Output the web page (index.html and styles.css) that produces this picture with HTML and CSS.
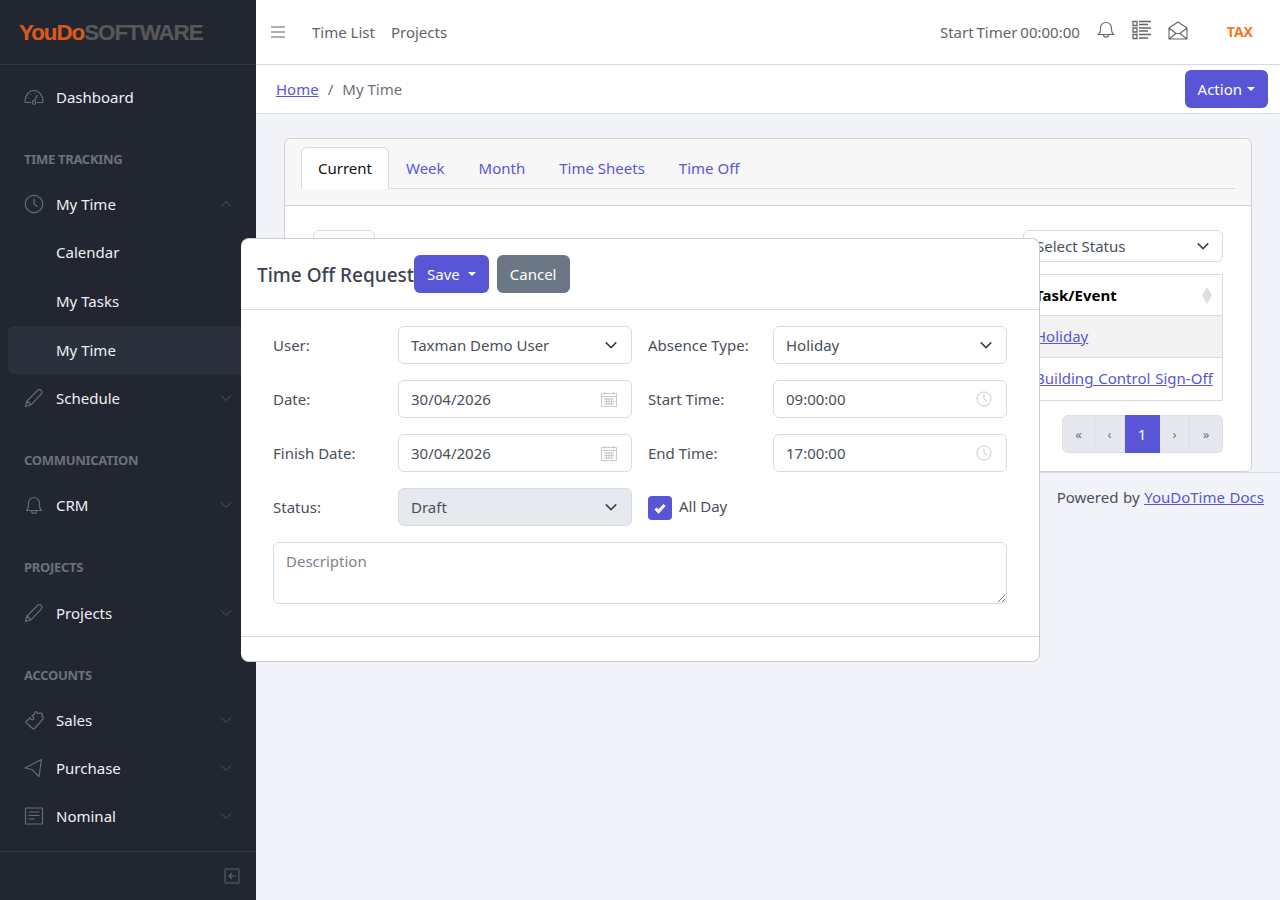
FILE: index.html
```html
<!DOCTYPE html>
<html lang="en">
<head>
    <meta charset="UTF-8">
    <title>My Time</title>
    <link rel="stylesheet" href="styles.css">
</head>
<body>
    <!-- Sidebar -->
    <aside class="sidebar">
        <div class="brand"><span class="brand-a">YouDo</span><span class="brand-b">SOFTWARE</span></div>
        <nav class="side-nav">
            <a class="side-link">
                <svg class="side-icon" viewBox="0 0 20 20"><path d="M1 15.500C1 8 5 3.500 10 3.500S19 8 19 15.500M1 15.500h6M13 15.500h6M10.500 14l2.500-6"/><circle cx="10" cy="15.500" r="1.800"/><path d="M4 11h.8M6 7.500h.8M10 6h.8"/></svg>
                <span>Dashboard</span>
            </a>
            <div class="side-title">TIME TRACKING</div>
            <a class="side-link">
                <svg class="side-icon" viewBox="0 0 20 20"><circle cx="10" cy="10" r="8.700"/><path d="M10 4.500V10l3.500 2.500"/></svg>
                <span>My Time</span>
                <svg class="side-caret" viewBox="0 0 12 8"><path d="M1 6.500l5-5 5 5"/></svg>
            </a>
            <a class="side-link side-sub">Calendar</a>
            <a class="side-link side-sub">My Tasks</a>
            <a class="side-link side-sub side-active">My Time</a>
            <a class="side-link">
                <svg class="side-icon" viewBox="0 0 20 20"><path d="M1.500 18.500l1.500-5.500L13.500 2.500a2.400 2.400 0 0 1 3.600 0 2.400 2.400 0 0 1 .2 3.400L7 16.800zM3 13l4 3.800"/></svg>
                <span>Schedule</span>
                <svg class="side-caret" viewBox="0 0 12 8"><path d="M1 1.500l5 5 5-5"/></svg>
            </a>
            <div class="side-title">COMMUNICATION</div>
            <a class="side-link">
                <svg class="side-icon" viewBox="0 0 20 20"><path d="M2.500 15.500c1.500-1.500 2-2.500 2-5V8a5.500 5.500 0 0 1 11 0v2.500c0 2.500.5 3.500 2 5zM7.500 15.500c0 4 5 4 5 0"/></svg>
                <span>CRM</span>
                <svg class="side-caret" viewBox="0 0 12 8"><path d="M1 1.500l5 5 5-5"/></svg>
            </a>
            <div class="side-title side-title-wide">PROJECTS</div>
            <a class="side-link">
                <svg class="side-icon" viewBox="0 0 20 20"><path d="M1.500 18.500l1.500-5.500L13.500 2.500a2.400 2.400 0 0 1 3.600 0 2.400 2.400 0 0 1 .2 3.400L7 16.800zM3 13l4 3.800"/></svg>
                <span>Projects</span>
                <svg class="side-caret" viewBox="0 0 12 8"><path d="M1 1.500l5 5 5-5"/></svg>
            </a>
            <div class="side-title">ACCOUNTS</div>
            <a class="side-link">
                <svg class="side-icon" viewBox="0 0 20 20"><path d="M1.500 12L6 8l1.500 1.500C9 10.500 10.500 9 9.500 7.500L8 6l2.500-2L11 2.500C12 1 14 2 13.500 3.500H15C16 2.500 18.500 3 18.500 4.500L17.500 6C19.500 6 19.500 8.500 18.500 9.500L11 18c-1 1-2 1-3 0z"/></svg>
                <span>Sales</span>
                <svg class="side-caret" viewBox="0 0 12 8"><path d="M1 1.500l5 5 5-5"/></svg>
            </a>
            <a class="side-link">
                <svg class="side-icon" viewBox="0 0 20 20"><path d="M1 10L17.500 1.500 15 18.500 8 11.500z"/></svg>
                <span>Purchase</span>
                <svg class="side-caret" viewBox="0 0 12 8"><path d="M1 1.500l5 5 5-5"/></svg>
            </a>
            <a class="side-link">
                <svg class="side-icon" viewBox="0 0 20 20"><path d="M1.500 2h17v16h-17zM4.500 6h11M4.500 9.500h11M4.500 13h6"/></svg>
                <span>Nominal</span>
                <svg class="side-caret" viewBox="0 0 12 8"><path d="M1 1.500l5 5 5-5"/></svg>
            </a>
        </nav>
        <div class="side-foot">
            <svg class="side-toggle" viewBox="0 0 16 16"><path d="M1 5V2a1 1 0 0 1 1-1h12a1 1 0 0 1 1 1v12a1 1 0 0 1-1 1H2a1 1 0 0 1-1-1v-3M1 5v6M12.500 8H5M8 5L5 8l3 3"/></svg>
        </div>
    </aside>

    <!-- Main column -->
    <div class="main">
        <header class="topbar">
            <svg class="burger" viewBox="0 0 14 12"><path d="M0 1h14M0 6h14M0 11h14"/></svg>
            <a class="top-link">Time List</a>
            <a class="top-link">Projects</a>
            <div class="top-right">
                <span class="timer">Start Timer 00:00:00</span>
                <svg class="top-icon" viewBox="0 0 18 18"><path d="M1.500 13.500c1.500-1.300 2-2.500 2-5V7a5.500 5.500 0 0 1 11 0v1.500c0 2.500.5 3.700 2 5zM6.500 13.500c0 3.500 5 3.500 5 0"/></svg>
                <svg class="top-icon top-list" viewBox="0 0 20 20"><path d="M1 1.500h4v4H1zM1 8h4v4H1zM1 14.500h4v4H1zM7 1.500h12M7 4.500h9M7 8h12M7 11h9M7 14.500h12M7 18h9"/></svg>
                <svg class="top-icon top-mail" viewBox="0 0 20 19"><path d="M1 7l9-6 9 6v11H1zM1 7l7 5.500h4L19 7M1 18l7-5.500M19 18l-7-5.500"/></svg>
                <span class="tax">TAX</span>
            </div>
        </header>
        <div class="crumbbar">
            <a class="link" href="#">Home</a>
            <span class="crumb-sep">/</span>
            <span class="crumb-now">My Time</span>
            <button class="btn btn-primary crumb-action">Action<i class="caret"></i></button>
        </div>

        <div class="content">
            <div class="card">
                <div class="card-head">
                    <ul class="tabs">
                        <li class="tab tab-active">Current</li>
                        <li class="tab">Week</li>
                        <li class="tab">Month</li>
                        <li class="tab">Time Sheets</li>
                        <li class="tab">Time Off</li>
                    </ul>
                </div>
                <div class="card-body">
                    <div class="under-top">
                        <div class="under-box"></div>
                        <div class="status-select">Select Status<svg class="chev" viewBox="0 0 16 16"><path d="M2 5l6 6 6-6"/></svg></div>
                    </div>
                    <div class="under-table">
                        <div class="ut-row ut-head"><span>Task/Event</span><svg class="sort" viewBox="0 0 10 17"><path d="M5 0l5 8.500L5 17 0 8.500z"/></svg></div>
                        <div class="ut-row ut-alt"><a class="link" href="#">Holiday</a></div>
                        <div class="ut-row ut-last"><a class="link" href="#">Building Control Sign-Off</a></div>
                    </div>
                    <div class="pager">
                        <span class="page">«</span>
                        <span class="page">‹</span>
                        <span class="page page-on">1</span>
                        <span class="page">›</span>
                        <span class="page">»</span>
                    </div>
                </div>
            </div>
        </div>
        <footer class="footer">Powered by&nbsp;<a class="link" href="#">YouDoTime Docs</a></footer>
    </div>

    <!-- Time off dialog -->
    <div class="dialog">
        <div class="dialog-head">
            <h5 class="dialog-title">Time Off Request</h5>
            <button class="btn btn-primary dialog-save">Save<i class="caret"></i></button>
            <button class="btn btn-grey">Cancel</button>
        </div>
        <div class="dialog-body">
            <div class="form-grid">
                <label class="form-label">User:</label>
                <div class="field">Taxman Demo User<svg class="chev" viewBox="0 0 16 16"><path d="M2 5l6 6 6-6"/></svg></div>
                <label class="form-label form-label-right">Absence Type:</label>
                <div class="field">Holiday<svg class="chev" viewBox="0 0 16 16"><path d="M2 5l6 6 6-6"/></svg></div>

                <label class="form-label">Date:</label>
                <div class="field">30/04/2026<svg class="field-icon" viewBox="0 0 16 16"><path d="M.5 2.500h15v13H.5zM.5 5.500h15M3.500 1v2.500M12.500 1v2.500M3 8h10M3 10.500h10M3 13h10M5.500 7v7M8 7v7M10.500 7v7"/></svg></div>
                <label class="form-label form-label-right">Start Time:</label>
                <div class="field">09:00:00<svg class="field-icon" viewBox="0 0 16 16"><circle cx="8" cy="8" r="7"/><path d="M8 3.500V8l3 2"/></svg></div>

                <label class="form-label">Finish Date:</label>
                <div class="field">30/04/2026<svg class="field-icon" viewBox="0 0 16 16"><path d="M.5 2.500h15v13H.5zM.5 5.500h15M3.500 1v2.500M12.500 1v2.500M3 8h10M3 10.500h10M3 13h10M5.500 7v7M8 7v7M10.500 7v7"/></svg></div>
                <label class="form-label form-label-right">End Time:</label>
                <div class="field">17:00:00<svg class="field-icon" viewBox="0 0 16 16"><circle cx="8" cy="8" r="7"/><path d="M8 3.500V8l3 2"/></svg></div>

                <label class="form-label">Status:</label>
                <div class="field field-off">Draft<svg class="chev" viewBox="0 0 16 16"><path d="M2 5l6 6 6-6"/></svg></div>
                <div class="check-row">
                    <span class="check"><svg viewBox="0 0 14 14"><path d="M2.500 7.500l3 3 6-6.500"/></svg></span>
                    <span class="check-text">All Day</span>
                </div>
            </div>
            <div class="textarea">Description
                <svg class="grip" viewBox="0 0 8 8"><path d="M1 8l7-7M5 8l3-3"/></svg>
            </div>
        </div>
        <div class="dialog-foot"></div>
    </div>
</body>
</html>
```

FILE: styles.css
```css
* {
    box-sizing: border-box;
}

body {
    margin: 0;
    height: 900px;
    overflow: hidden;
    display: flex;
    background-color: #f1f3f8;
    color: #4a4f5b;
    font-family: 'Noto Sans', sans-serif;
    font-size: 15px;
    line-height: 22px;
}

.link {
    color: #5856d6;
    text-decoration: underline;
}

/* Sidebar */
.sidebar {
    width: 256px;
    height: 900px;
    flex-shrink: 0;
    display: flex;
    flex-direction: column;
    background-color: #212631;
    color: #f0f1f4;
}

.brand {
    height: 65px;
    padding: 19px 0 0 19px;
    border-bottom: 1px solid #323946;
    font-family: 'Liberation Sans', sans-serif;
    font-size: 22.300px;
    line-height: 27px;
    font-weight: 700;
    letter-spacing: -1px;
    -webkit-text-stroke: 0.2px;
}

.brand-a {
    color: #d9591c;
}

.brand-b {
    color: #585858;
}

.side-nav {
    flex: 1;
    padding: 8px 8px 0;
}

.side-link {
    height: 48px;
    display: flex;
    align-items: center;
    padding: 0 16px;
    border-radius: 6px;
}

.side-icon {
    width: 20px;
    height: 20px;
    margin-right: 12px;
    fill: none;
    stroke: #666b76;
    stroke-width: 1.200;
    stroke-linejoin: round;
}

.side-caret {
    width: 12px;
    height: 8px;
    margin-left: auto;
    margin-right: 0;
    fill: none;
    stroke: #515762;
    stroke-width: 1;
}

.side-sub {
    padding-left: 48px;
    padding-bottom: 2px;
    height: 49px;
}

.side-active {
    background-color: #2b303d;
    padding-bottom: 0;
    height: 48px;
}

.side-title {
    height: 59px;
    padding: 27px 16px 0;
    color: #6c717b;
    font-size: 13px;
    line-height: 22px;
    font-weight: 700;
    letter-spacing: -0.3px;
}

.side-title-wide {
    height: 60px;
}

.side-foot {
    height: 49px;
    display: flex;
    align-items: center;
    justify-content: flex-end;
    padding-right: 16px;
    border-top: 1px solid #323946;
}

.side-toggle {
    width: 16px;
    height: 16px;
    fill: none;
    stroke: #5c616c;
    stroke-width: 1.100;
}

/* Main column */
.main {
    flex: 1;
    min-width: 0;
    display: flex;
    flex-direction: column;
}

.topbar {
    height: 65px;
    display: flex;
    align-items: center;
    padding-left: 15px;
    padding-right: 27px;
    background-color: #fff;
    border-bottom: 1px solid #d8dbe4;
    color: #5f646d;
}

.burger {
    width: 14px;
    height: 12px;
    margin-right: 27px;
    fill: none;
    stroke: #5a5f68;
    stroke-width: 1.200;
}

.top-link {
    margin-right: 16px;
}

.top-right {
    margin-left: auto;
    display: flex;
    align-items: center;
}

.timer {
    margin-right: 17px;
    word-spacing: -1px;
}

.top-icon {
    width: 18px;
    height: 18px;
    margin-right: 17px;
    margin-top: -4px;
    fill: none;
    stroke: #666;
    stroke-width: 1.100;
}

.top-list {
    width: 20px;
    height: 20px;
    margin-right: 16px;
    stroke-width: 1.300;
}

.top-mail {
    width: 20px;
    height: 19px;
    margin-right: 39px;
}

.tax {
    color: #f5761a;
    font-size: 14px;
    font-weight: 700;
}

.crumbbar {
    height: 49px;
    display: flex;
    align-items: center;
    padding: 0 12px 0 20px;
    background-color: #fff;
    border-bottom: 1px solid #d8dbe4;
    color: #6b7079;
}

.crumb-sep {
    margin: 0 9px;
}

.crumb-action {
    margin-left: auto;
    padding-left: 14px;
}

.btn {
    height: 38px;
    padding: 0 13px;
    border: none;
    border-radius: 6px;
    color: #fff;
    font-family: 'Noto Sans', sans-serif;
    font-size: 15px;
    display: inline-flex;
    align-items: center;
}

.btn-primary {
    background-color: #5856d6;
}

.btn-grey {
    background-color: #6b7785;
    padding: 0 13px;
}

.caret {
    margin-left: 5px;
    border-top: 4px solid #fff;
    border-left: 4px solid transparent;
    border-right: 4px solid transparent;
}

/* Card behind the dialog */
.content {
    height: 358px;
    padding: 24px 28px 0;
}

.card {
    height: 334px;
    background-color: #fff;
    border: 1px solid #d0d2d8;
    border-radius: 6px;
}

.card-head {
    height: 67px;
    padding: 8px 16px 0;
    background-color: #f7f7f7;
    border-bottom: 1px solid #d0d2d8;
    border-radius: 6px 6px 0 0;
}

.tabs {
    list-style: none;
    margin: 0;
    padding: 0;
    height: 42px;
    display: flex;
    border-bottom: 1px solid #d8dbe4;
}

.tab {
    height: 42px;
    padding: 9px 16px;
    color: #5856d6;
    border-radius: 6px 6px 0 0;
    border: 1px solid transparent;
}

.tab-active {
    background-color: #fff;
    border-color: #d8dbe4 #d8dbe4 #fff;
    color: #111;
}

.card-body {
    padding: 24px 28px 0;
}

.under-top {
    display: flex;
    justify-content: space-between;
    margin-bottom: 12px;
}

.under-box {
    width: 62px;
    height: 32px;
    border: 1px solid #d8dbe4;
    border-radius: 6px;
}

.status-select {
    width: 200px;
    height: 32px;
    display: flex;
    align-items: center;
    justify-content: space-between;
    padding: 0 12px;
    border: 1px solid #d8dbe4;
    border-radius: 6px;
}

.chev {
    width: 14px;
    height: 14px;
    fill: none;
    stroke: #3c4250;
    stroke-width: 1.800;
}

.under-table {
    width: 300px;
    margin-left: auto;
    border: 1px solid #d8dbe4;
}

.ut-row {
    height: 42px;
    display: flex;
    align-items: center;
    justify-content: space-between;
    padding: 0 10px 2px 111px;
    border-top: 1px solid #d8dbe4;
    white-space: nowrap;
    word-spacing: 1px;
}

.ut-head {
    height: 40px;
    border-top: none;
    color: #000;
    font-weight: 700;
    padding-bottom: 0;
}

.ut-alt {
    background-color: #f2f2f2;
}

.ut-last {
    height: 43px;
}

.sort {
    width: 10px;
    height: 17px;
    fill: #dedede;
}

.pager {
    display: flex;
    justify-content: flex-end;
    margin-top: 14px;
}

.page {
    width: 30px;
    height: 38px;
    display: flex;
    align-items: center;
    justify-content: center;
    background-color: #e6e8ed;
    border: 1px solid #dcdfe6;
    border-left: none;
    color: #6b7079;
    font-size: 13px;
}

.page:first-child {
    width: 33px;
    border-left: 1px solid #dcdfe6;
    border-radius: 6px 0 0 6px;
}

.page:last-child {
    width: 33px;
    border-radius: 0 6px 6px 0;
}

.page-on {
    width: 35px;
    background-color: #5856d6;
    border-color: #5856d6;
    color: #fff;
    font-size: 15px;
}

.footer {
    height: 50px;
    display: flex;
    align-items: center;
    justify-content: flex-end;
    padding: 0 16px 2px 0;
    border-top: 1px solid #d8dbe4;
    word-spacing: 0.700px;
}

/* Dialog */
.dialog {
    position: absolute;
    left: 241px;
    top: 238px;
    width: 799px;
    height: 424px;
    display: flex;
    flex-direction: column;
    background-color: #fff;
    border: 1px solid #c9ccd3;
    border-left: none;
    border-radius: 8px;
}

.dialog-head {
    height: 71px;
    display: flex;
    align-items: center;
    padding: 0 16px;
    border-bottom: 1px solid #d8dbe4;
}

.dialog-title {
    margin: 2px 0 0;
    color: #3c4250;
    font-size: 19px;
    line-height: 28px;
    font-weight: 500;
}

.dialog-save {
    margin-right: 8px;
}

.dialog-save .caret {
    margin-left: 8px;
}

.dialog-body {
    flex: 1;
    padding: 16px 32px;
}

.form-grid {
    display: grid;
    grid-template-columns: 125px 234px 141px 234px;
    grid-auto-rows: 38px;
    row-gap: 16px;
}

.form-label {
    display: flex;
    align-items: center;
}

.form-label-right {
    padding-left: 16px;
}

.field {
    height: 38px;
    display: flex;
    align-items: center;
    justify-content: space-between;
    padding: 0 14px 0 12px;
    border: 1px solid #d8dbe4;
    border-radius: 6px;
}

.field .chev {
    margin-right: -1px;
}

.field-off {
    background-color: #e6e9ee;
}

.field-icon {
    width: 16px;
    height: 16px;
    fill: none;
    stroke: #c9c9c9;
    stroke-width: 1;
}

.check-row {
    grid-column: span 2;
    margin-left: 16px;
    display: flex;
    align-items: center;
}

.check {
    width: 24px;
    height: 24px;
    margin-top: 2px;
    margin-right: 7px;
    background-color: #5856d6;
    border-radius: 4px;
    display: flex;
    align-items: center;
    justify-content: center;
}

.check svg {
    width: 14px;
    height: 14px;
    fill: none;
    stroke: #fff;
    stroke-width: 3;
}

.check-text {
    margin-bottom: 2px;
}

.textarea {
    position: relative;
    height: 62px;
    margin-top: 16px;
    padding: 7px 12px;
    border: 1px solid #d8dbe4;
    border-radius: 6px;
    color: #7d828b;
}

.grip {
    position: absolute;
    right: 1px;
    bottom: 1px;
    width: 8px;
    height: 8px;
    fill: none;
    stroke: #777;
    stroke-width: 1;
}

.dialog-foot {
    height: 25px;
    border-top: 1px solid #d8dbe4;
}
```
